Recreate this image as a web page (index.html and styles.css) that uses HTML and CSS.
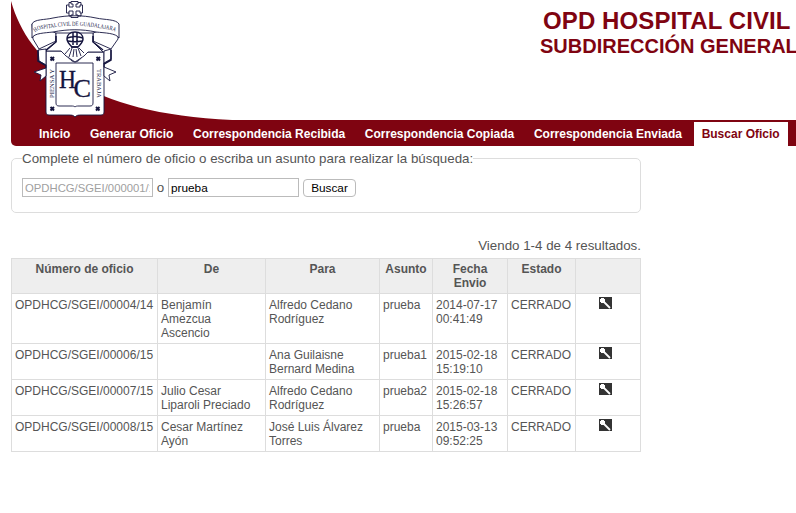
FILE: index.html
```html
<!DOCTYPE html>
<html lang="es">
<head>
<meta charset="utf-8">
<title>Buscar Oficio</title>
<link rel="stylesheet" href="styles.css">
</head>
<body>
<div class="page">
  <header class="header">
    <svg class="emblem" width="240" height="120" viewBox="11 0 240 120">
      <path class="swoosh" d="M11 1C29 65 92 117 247 120.500H11Z"/>
      <g class="crest">
        <path d="M46 51h15c5 0 8 11 14 11s8-10 13-10h16v60c0 2-1 3-3 3H82c-4 0-5 0-7 2-2-2-3-2-7-2H49c-2 0-3-1-3-3z"/>
        <path d="M46 49l-8 1 1 11 7 4v3l-12 4 7 3-1 6 6-5zM104 51l7-2v10l-7 4v4l12 5-7 3 1 6-6-5z"/>
        <path d="M32 24l1 15 6 10 17-8v-8zM118 24v15l-7 10-18-8v-8z"/>
        <path d="M56 33v9l-10 9h15l5 5 9 6 9-6 4-4h15l-10-10v-9z"/>
        <path d="M32 24c2-5 13-4 21-6 15-3 29-3 43 0 9 2 20 1 23 6v14c-3-5-14-5-23-6-14-3-28-3-43 0-8 1-19 1-21 6z"/>
        <path class="bold line" d="M38 50v11l7 4M111 50v10l-7 4M56 36v6l-10 8M93 36v6l10 8"/>
        <path d="M56 63h37v40c0 2-1 3-3 3H79c-2 0-3 0-4 1-1-1-2-1-4-1H59c-2 0-3-1-3-3z"/>
        <path d="M65 54l5-6M69 57l3-9M73 57l1-8M77 57l-1-8M81 56l-3-8M84 53l-5-5"/>
        <path class="bold" d="M67 39c0-4 3-7 8-7s8 3 8 7c0 3-3 6-5 8h-6c-2-2-5-5-5-8z"/>
        <path class="bold line" d="M67 38c5-2 11-2 16 0M68 41c5 1 9 1 14 0M73 33v12M77 33v12M71 47h7"/>
        <path class="line" d="M73 7V4h-2V1.500h7V4h-2v3h4V5h2.500v8H80v-2h-4v4h2v2.500h-7V15h2v-4h-4v2h-2.500V5H69v2zM69 5V2.500h2M78 2.500h3V5M69 13v3h2M78 16h3v-3"/>
        <path class="mark line" d="M50.500 57l3.500 3.500m0-3.500l-3.500 3.500M96.500 57l3.500 3.500m0-3.500l-3.500 3.500M50.500 107l3.500 3.500m0-3.500l-3.500 3.500M96 107l3.500 3.500m0-3.500l-3.500 3.500"/>
      </g>
      <path id="banner" fill="none" d="M35 32.500C39 28 47 29 53 27.500C68 25 82 25 96 27.500C104 29 112 29 117 33"/>
      <text class="motto"><textPath href="#banner" textLength="82" lengthAdjust="spacingAndGlyphs">HOSPITAL CIVIL DE GUADALAJARA</textPath></text>
      <text class="motto side" transform="translate(53.500 98) rotate(-90)" textLength="29" lengthAdjust="spacingAndGlyphs">PIENSA Y</text>
      <text class="motto side" transform="translate(96.500 69) rotate(90)" textLength="29" lengthAdjust="spacingAndGlyphs">TRABAJA</text>
      <text class="initial" x="59" y="87.500" textLength="17" lengthAdjust="spacingAndGlyphs">H</text>
      <text class="initial" x="73.500" y="97" textLength="17.500" lengthAdjust="spacingAndGlyphs">C</text>
    </svg>
    <div class="titles">
      <h1>OPD HOSPITAL CIVIL</h1>
      <h2>SUBDIRECCIÓN GENERAL</h2>
    </div>
  </header>
  <nav class="menu">
    <a>Inicio</a><a>Generar Oficio</a><a>Correspondencia Recibida</a><a>Correspondencia Copiada</a><a>Correspondencia Enviada</a><a class="active">Buscar Oficio</a>
  </nav>
  <main class="content">
    <fieldset class="search">
      <legend>Complete el número de oficio o escriba un asunto para realizar la búsqueda:</legend>
      <div class="fields">
        <input class="number" type="text" placeholder="OPDHCG/SGEI/000001/15">
        <span>o</span>
        <input type="text" value="prueba">
        <button>Buscar</button>
      </div>
    </fieldset>
    <div class="summary">Viendo 1-4 de 4 resultados.</div>
    <svg class="defs" width="0" height="0"><symbol id="view" viewBox="0 0 13 12"><path fill="#333" d="M0 0h13v12H0z"/><path fill="#fff" d="M2 1h3v1h1v3H5v1H2V5H1V2h1z"/><path stroke="#fff" stroke-width="1.800" d="M4.500 4.500l6.500 6.500"/></symbol></svg>
    <table class="results">
      <colgroup><col class="c1"><col class="c2"><col class="c3"><col class="c4"><col class="c5"><col class="c6"><col class="c7"></colgroup>
      <thead><tr><th>Número de oficio</th><th>De</th><th>Para</th><th>Asunto</th><th>Fecha Envio</th><th>Estado</th><th></th></tr></thead>
      <tbody>
        <tr><td>OPDHCG/SGEI/00004/14</td><td>Benjamín Amezcua Ascencio</td><td>Alfredo Cedano Rodríguez</td><td>prueba</td><td>2014-07-17 00:41:49</td><td>CERRADO</td><td class="action"><svg width="13" height="12"><use href="#view"/></svg></td></tr>
        <tr><td>OPDHCG/SGEI/00006/15</td><td></td><td>Ana Guilaisne Bernard Medina</td><td>prueba1</td><td>2015-02-18 15:19:10</td><td>CERRADO</td><td class="action"><svg width="13" height="12"><use href="#view"/></svg></td></tr>
        <tr><td>OPDHCG/SGEI/00007/15</td><td>Julio Cesar Liparoli Preciado</td><td>Alfredo Cedano Rodríguez</td><td>prueba2</td><td>2015-02-18 15:26:57</td><td>CERRADO</td><td class="action"><svg width="13" height="12"><use href="#view"/></svg></td></tr>
        <tr><td>OPDHCG/SGEI/00008/15</td><td>Cesar Martínez Ayón</td><td>José Luis Álvarez Torres</td><td>prueba</td><td>2015-03-13 09:52:25</td><td>CERRADO</td><td class="action"><svg width="13" height="12"><use href="#view"/></svg></td></tr>
      </tbody>
    </table>
  </main>
</div>
</body>
</html>
```
FILE: styles.css
```css
* { box-sizing: border-box; }
body {
  margin: 0;
  background: #fff;
  color: #555;
  font: 13.333px/18px "Liberation Sans", Arial, sans-serif;
  overflow: hidden;
}
.page { margin-left: 11px; }
.header { display: flex; justify-content: space-between; height: 120px; }
.emblem { flex: none; }
.swoosh { fill: #7f0411; }
.crest path { fill: #fff; stroke: #15153f; stroke-width: 0.9; }
.crest .line { fill: none; }
.crest .bold { stroke-width: 1.5; }
.crest .mark { stroke-width: 2; }
.motto, .initial { font-family: "Liberation Serif", serif; fill: #15153f; }
.motto { font-size: 6px; }
.side { font-size: 7px; }
.initial { font-size: 25px; stroke: #15153f; stroke-width: 0.3; }
.titles {
  flex: none;
  width: 258px;
  padding-top: 7px;
  white-space: nowrap;
  color: #7f0411;
}
h1, h2 { margin: 0; font-weight: bold; }
h1 { padding-left: 5px; font-size: 24px; line-height: 28px; letter-spacing: 0.1px; }
h2 { padding-left: 2px; font-size: 20px; line-height: 23px; }
.menu {
  display: flex;
  height: 26px;
  padding: 2px 0 0 20px;
  background: #7f0411;
  border-bottom-left-radius: 5px;
  font-size: 12px;
  font-weight: bold;
  line-height: 24px;
}
.menu a { flex: none; padding: 0 8px; margin-right: 3.7px; color: #fff; white-space: nowrap; }
.menu .active { background: #fff; color: #7f0411; }
.content { width: 630px; padding-top: 3px; }
.search {
  height: 64px;
  margin: 0;
  padding: 0 10px;
  border: 1px solid #ddd;
  border-radius: 5px;
}
.search legend { padding: 1px 0 0; line-height: 17px; white-space: nowrap; }
.fields { display: flex; align-items: center; height: 20px; margin-top: 11px; }
.fields span { width: 15px; text-align: center; }
.fields input {
  width: 131px;
  height: 19px;
  margin-top: -1px;
  padding: 1px 2px;
  border: 1px solid #bbb;
  background: #fff;
  color: #000;
  font: 11.8px "Liberation Sans", Arial, sans-serif;
}
.fields .number { font-size: 11.3px; }
.fields input::placeholder { color: #a0a0a0; }
.fields button {
  width: 53px;
  height: 18px;
  margin-left: 4px;
  padding: 0;
  border: 1px solid #bbb;
  border-radius: 4px;
  background: #fff;
  color: #000;
  font: 11.8px "Liberation Sans", Arial, sans-serif;
}
.summary { margin-top: 23px; height: 22px; line-height: 19px; text-align: right; }
.defs { display: block; }
.results {
  width: 630px;
  table-layout: fixed;
  border-collapse: separate;
  border-spacing: 0;
  border: solid #ddd;
  border-width: 1px 0 0 1px;
  font-size: 12px;
  line-height: 14px;
}
.c1 { width: 146px; }
.c2 { width: 108px; }
.c3 { width: 114px; }
.c4 { width: 53px; }
.c5 { width: 75px; }
.c6 { width: 68px; }
.c7 { width: 65px; }
.results th, .results td {
  padding: 4px 3px 3px;
  border: solid #ddd;
  border-width: 0 1px 1px 0;
  text-align: left;
  vertical-align: top;
}
.results th { padding: 3px; background: #eee; text-align: center; }
.results .action { padding: 3px 9px 3px 3px; text-align: center; }
.action svg { display: block; margin: 0 auto; }
```
